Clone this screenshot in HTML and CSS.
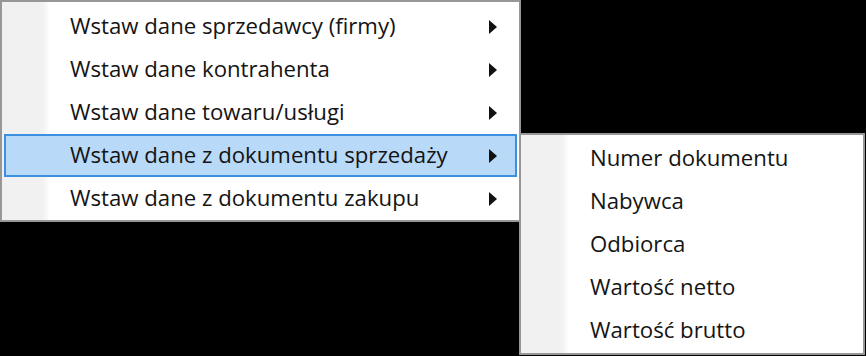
FILE: index.html
```html
<!DOCTYPE html>
<html lang="pl">
<head>
  <meta charset="UTF-8">
  <title>Menu kontekstowe</title>
  <link rel="stylesheet" href="styles.css">
</head>
<body>

<div class="menu-wrap">
  <ul class="menu main-menu">
    <li class="item"><span class="label">Wstaw dane sprzedawcy (firmy)</span><span class="arrow"></span></li>
    <li class="item"><span class="label">Wstaw dane kontrahenta</span><span class="arrow"></span></li>
    <li class="item"><span class="label">Wstaw dane towaru/usługi</span><span class="arrow"></span></li>
    <li class="item active"><span class="label">Wstaw dane z dokumentu sprzedaży</span><span class="arrow"></span></li>
    <li class="item"><span class="label">Wstaw dane z dokumentu zakupu</span><span class="arrow"></span></li>
  </ul>

  <ul class="menu sub-menu">
    <li class="item"><span class="label">Numer dokumentu</span></li>
    <li class="item"><span class="label">Nabywca</span></li>
    <li class="item"><span class="label">Odbiorca</span></li>
    <li class="item"><span class="label">Wartość netto</span></li>
    <li class="item"><span class="label">Wartość brutto</span></li>
  </ul>
</div>

</body>
</html>
```

FILE: styles.css
```css
body {
  margin: 0;
  background: #000;
  font-family: "Open Sans", "Noto Sans", sans-serif;
  font-size: 22.2px;
  color: #141414;
  width: 866px;
  height: 356px;
  overflow: hidden;
}
.menu-wrap {
  position: relative;
  width: 866px;
  height: 356px;
}
.menu {
  list-style: none;
  margin: 0;
  padding: 3px 0 0;
  border: 2px solid #979797;
  background: linear-gradient(to right, #f1f1f1 0, #f1f1f1 40px, #fafafa 46px, #fff 47px);
  box-sizing: border-box;
}
.main-menu {
  width: 521px;
  height: 222px;
}
.sub-menu {
  position: absolute;
  left: 519px;
  top: 133px;
  width: 346px;
  height: 222px;
  padding-top: 2px;
}
.item {
  display: flex;
  align-items: center;
  height: 43px;
  margin: 0 2px;
  padding-left: 66px;
  box-sizing: border-box;
}
.sub-menu .item {
  padding-left: 67px;
}
.label {
  flex: 1;
  white-space: nowrap;
  margin-top: -2px;
}
.arrow {
  width: 0;
  height: 0;
  border-top: 7px solid transparent;
  border-bottom: 7px solid transparent;
  border-left: 8px solid #111;
  margin-right: 20px;
}
.item.active {
  background: #b9d9f8;
  border: 2px solid #3d8fe0;
  padding-left: 64px;
}
.item.active .arrow {
  margin-right: 18px;
}
```
